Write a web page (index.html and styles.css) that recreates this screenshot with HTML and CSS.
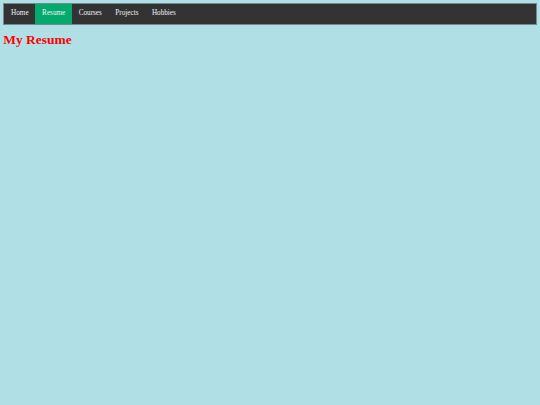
FILE: index.html
```html
<!DOCTYPE html>
<html>
<head>
<meta charset="utf-8">
<title>My Resume</title>
<link rel="stylesheet" href="styles.css">
</head>
<body>
<ul class="nav">
  <li><a href="#">Home</a></li>
  <li><a class="active" href="#">Resume</a></li>
  <li><a href="#">Courses</a></li>
  <li><a href="#">Projects</a></li>
  <li><a href="#">Hobbies</a></li>
</ul>
<h1 class="title">My Resume</h1>
</body>
</html>
```
FILE: styles.css
```css
html, body {
  background: #b0e0e6;
}
body {
  margin: 3.36px;
  font-family: "Liberation Serif", "Times New Roman", serif;
}
.nav {
  list-style: none;
  margin: 0;
  padding: 0;
  display: flex;
  background: #333333;
  border: 1px solid #6e8c91;
}
.nav li a {
  display: block;
  color: #f2f2f2;
  text-decoration: none;
  font-size: 7.2px;
  line-height: 7.7px;
  padding: 5.9px 6.72px;
}
.nav li a.active {
  background: #04aa6d;
}
.title {
  color: #ff0000;
  font-size: 13.44px;
  font-weight: bold;
  margin: 7.5px 0 9px;
}
```
